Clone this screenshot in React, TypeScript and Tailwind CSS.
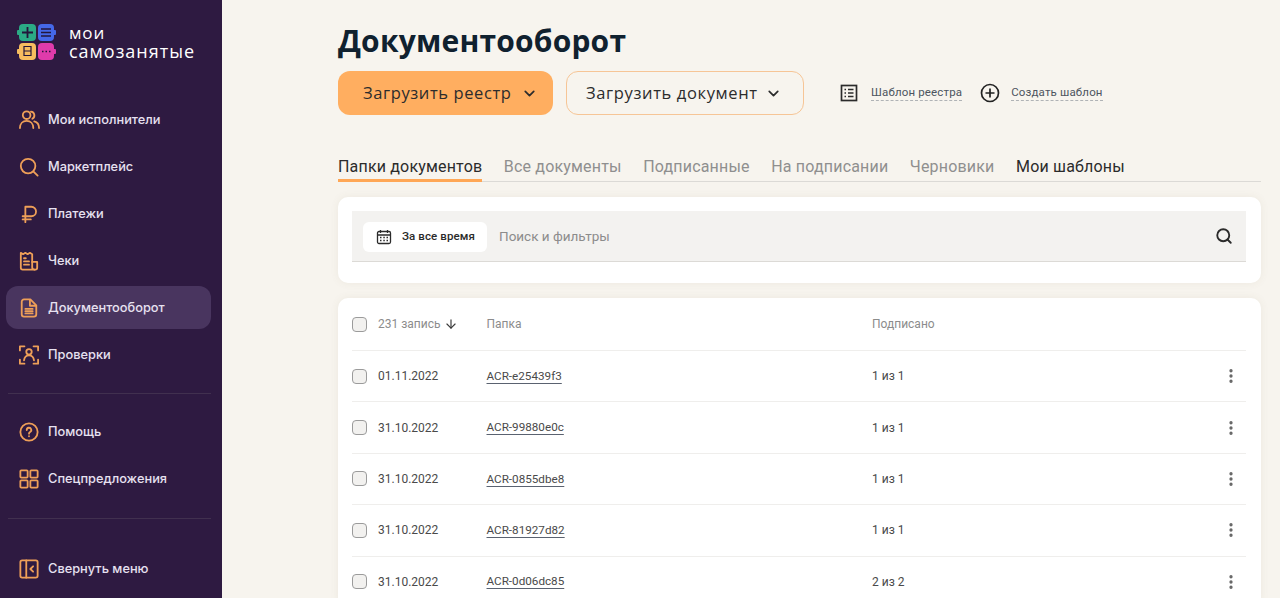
import { ChevronDown, ArrowDown, Search, EllipsisVertical } from 'lucide-react';
import type { ReactNode } from 'react';

const ic = 'w-[20px] h-[20px] fill-none stroke-[#ee9f58] stroke-[2]';

// ── Sidebar icons ────────────────────────────────────────────────────────────
const icons: Record<string, ReactNode> = {
  people: (
    <svg viewBox="0 0 22 22" className="w-[21px] h-[21px] fill-none stroke-[#ee9f58] stroke-[1.9]" strokeLinecap="round">
      <circle cx="8" cy="6.500" r="4" />
      <path d="M1 20c0-4.500 3-7.500 7-7.500s7 3 7 7.500" />
      <path d="M12.500 2.700a4 4 0 0 1 1.500 7.500M16 13c3 .8 5 3.500 5 7" />
    </svg>
  ),
  search: (
    <svg viewBox="0 0 22 22" className={ic} strokeLinecap="round">
      <circle cx="10" cy="10" r="8" />
      <path d="M16 16l4.500 4.500" />
    </svg>
  ),
  ruble: (
    <svg viewBox="0 0 22 22" className={ic} strokeLinecap="round" strokeLinejoin="round">
      <path d="M7 20V3h6.500a5 5 0 0 1 0 10.500H4M4 17h9" />
    </svg>
  ),
  receipt: (
    <svg viewBox="0 0 22 22" className={ic} strokeLinecap="round" strokeLinejoin="round">
      <path d="M2 2l2.500 1.500L7 2l2.500 1.500L12 2l2.500 1.500V18c0 1.500 1 2.500 2.500 2.500H4c-1.200 0-2-.8-2-2z" />
      <path d="M14.500 12H20v6.500a2 2 0 0 1-2 2h-1M5.500 8h2M5.500 11.500h5.500M5.500 15h5.500" />
    </svg>
  ),
  doc: (
    <svg viewBox="0 0 22 22" className={ic} strokeLinecap="round" strokeLinejoin="round">
      <path d="M3 4a2.500 2.500 0 0 1 2.500-2.500h7L19 8v10a2.500 2.500 0 0 1-2.500 2.500h-11A2.500 2.500 0 0 1 3 18z" />
      <path d="M12 2v6.500h6.500M7 12h8M7 14.500h8M7 17h8" />
    </svg>
  ),
  face: (
    <svg viewBox="0 0 22 22" className={ic} strokeLinecap="round" strokeLinejoin="round">
      <path d="M1 6V1.500h5M16 1.500h5V6M1 16v4.500h5M16 20.500h5V16" />
      <circle cx="11" cy="7.500" r="3" />
      <path d="M5.500 17c.5-3.500 2.500-5.500 5.500-5.500s5 2 5.500 5.500" />
    </svg>
  ),
  help: (
    <svg viewBox="0 0 22 22" className={ic} strokeLinecap="round" strokeLinejoin="round">
      <circle cx="11" cy="11" r="9.500" />
      <path d="M8.500 8.800a2.500 2.500 0 1 1 3.700 2.200c-.8.500-1.200 1-1.200 1.800M11 15.700v.1" />
    </svg>
  ),
  grid: (
    <svg viewBox="0 0 22 22" className={ic} strokeLinejoin="round">
      <rect x="1.500" y="1.500" width="8" height="8" rx="1" />
      <rect x="12.500" y="1.500" width="8" height="8" rx="1" />
      <rect x="1.500" y="12.500" width="8" height="8" rx="1" />
      <rect x="12.500" y="12.500" width="8" height="8" rx="1" />
    </svg>
  ),
  collapse: (
    <svg viewBox="0 0 22 22" className={ic} strokeLinecap="round" strokeLinejoin="round">
      <rect x="1.500" y="1.500" width="19" height="19" rx="2" />
      <path d="M8 1.500v19M15.500 8l-3 3 3 3" />
    </svg>
  ),
};

function Logo() {
  return (
    <svg viewBox="0 0 40 40" className="w-[40px] h-[40px] shrink-0">
      <rect x="2" y="2" width="17" height="17" rx="4" fill="#2bab85" />
      <rect x="0" y="8" width="3" height="5" rx="1" fill="#2bab85" />
      <path d="M10.500 5v11M5 10.500h11" stroke="#23163a" strokeWidth="1.800" />
      <rect x="21" y="2" width="16" height="17" rx="4" fill="#4568e8" />
      <rect x="36" y="8" width="3" height="5" rx="1" fill="#4568e8" />
      <path d="M24 7h10M24 10.500h10M24 14h10" stroke="#23163a" strokeWidth="1.500" />
      <rect x="2" y="21" width="17" height="17" rx="4" fill="#f7bd5f" />
      <rect x="0" y="27" width="3" height="5" rx="1" fill="#f7bd5f" />
      <path d="M7 24.500h7v9H7zM7 29h7" fill="none" stroke="#23163a" strokeWidth="1.200" />
      <rect x="21" y="21" width="16" height="17" rx="4" fill="#e03bab" />
      <rect x="36" y="27" width="3" height="5" rx="1" fill="#e03bab" />
      <path d="M25 29.500h1.500M28.500 29.500h1.500M32 29.500h1.500" stroke="#23163a" strokeWidth="1.600" />
    </svg>
  );
}

function NavItem({ icon, label, active }: { icon: string; label: string; active?: boolean }) {
  return (
    <div className={`flex items-center gap-[8px] h-[43px] pl-[12px] rounded-[12px] text-[12.800px] font-medium text-[#e7e1f0] ${active ? 'bg-[#49355f]' : ''}`}>
      <span className="w-[22px] flex justify-center">{icons[icon]}</span>
      <span>{label}</span>
    </div>
  );
}

// ── Table data ───────────────────────────────────────────────────────────────
const ROWS = [
  { date: '01.11.2022', folder: 'ACR-e25439f3', signed: '1 из 1' },
  { date: '31.10.2022', folder: 'ACR-99880e0c', signed: '1 из 1' },
  { date: '31.10.2022', folder: 'ACR-0855dbe8', signed: '1 из 1' },
  { date: '31.10.2022', folder: 'ACR-81927d82', signed: '1 из 1' },
  { date: '31.10.2022', folder: 'ACR-0d06dc85', signed: '2 из 2' },
];

const TABS = ['Все документы', 'Подписанные', 'На подписании', 'Черновики'];

function Checkbox() {
  return <span className="w-[15px] h-[15px] rounded-[4px] border border-[#9b9b9b] bg-[#f2f1ef] shrink-0" />;
}

export default function App() {
  return (
    <div className="flex h-[598px] w-[1280px] overflow-hidden bg-[#f7f4ee] font-['Inter',sans-serif]">
      {/* Sidebar */}
      <aside className="w-[222px] shrink-0 bg-[#2e1a41] pl-[6px] pr-[11px] pt-[22px]">
        <div className="flex items-center gap-[12px] pl-[11px] h-[40px]">
          <Logo />
          <div className="font-['Open_Sans',sans-serif] font-medium text-white -mt-[1px]">
            <div className="text-[17px] leading-[19px] h-[19px] tracking-[0.9px]">мои</div>
            <div className="text-[18px] leading-[19px] h-[19px] tracking-[1px]">самозанятые</div>
          </div>
        </div>
        <nav className="mt-[36px] flex flex-col gap-[4px]">
          <NavItem icon="people" label="Мои исполнители" />
          <NavItem icon="search" label="Маркетплейс" />
          <NavItem icon="ruble" label="Платежи" />
          <NavItem icon="receipt" label="Чеки" />
          <NavItem icon="doc" label="Документооборот" active />
          <NavItem icon="face" label="Проверки" />
        </nav>
        <div className="mt-[17px] mb-[16px] ml-[2px] h-px bg-[#41304f]" />
        <nav className="flex flex-col gap-[4px]">
          <NavItem icon="help" label="Помощь" />
          <NavItem icon="grid" label="Спецпредложения" />
        </nav>
        <div className="mt-[18px] mb-[28px] ml-[2px] h-px bg-[#41304f]" />
        <NavItem icon="collapse" label="Свернуть меню" />
      </aside>

      {/* Main */}
      <main className="ml-[116px] w-[923px] shrink-0 pt-[22px]">
        <h1 className="text-[30px] leading-[38px] font-bold text-[#10212f] font-['Open_Sans',sans-serif] tracking-[0.2px]">Документооборот</h1>

        <div className="mt-[11px] flex items-center">
          <button className="w-[215px] h-[44px] rounded-[12px] bg-[#ffae60] flex items-center pl-[25px] gap-[9px] text-[16.500px] text-[#2c2c2c] font-['Open_Sans',sans-serif] tracking-[0.6px]">
            Загрузить реестр <ChevronDown size={17} strokeWidth={2.4} />
          </button>
          <button className="ml-[13px] w-[238px] h-[44px] rounded-[12px] border border-[#f6c596] flex items-center pl-[19px] gap-[7px] text-[16.500px] text-[#2c2c2c] font-['Open_Sans',sans-serif] tracking-[0.63px]">
            Загрузить документ <ChevronDown size={17} strokeWidth={2.4} />
          </button>
          <svg viewBox="0 0 18 18" className="ml-[36px] w-[18px] h-[18px] fill-none stroke-[#2b2b2b] stroke-[1.7]">
            <rect x="1.500" y="1.500" width="15" height="15" />
            <path d="M4.500 5.500h1.500M8 5.500h5.500M4.500 9h1.500M8 9h5.500M4.500 12.500h1.500M8 12.500h5.500" />
          </svg>
          <span className="ml-[13px] text-[11.500px] leading-[15px] text-[#4d5560] border-b border-dashed border-[#b0b3b6] font-['Roboto',sans-serif] tracking-[0.15px]">Шаблон реестра</span>
          <svg viewBox="0 0 20 20" className="ml-[18px] w-[20px] h-[20px] fill-none stroke-[#222] stroke-[1.7]">
            <circle cx="10" cy="10" r="8.500" />
            <path d="M10 5.500v9M5.500 10h9" />
          </svg>
          <span className="ml-[11px] text-[11.500px] leading-[15px] text-[#4d5560] border-b border-dashed border-[#b0b3b6] font-['Roboto',sans-serif] tracking-[0.15px]">Создать шаблон</span>
        </div>

        {/* Tabs */}
        <div className="mt-[29px] h-[38px] flex gap-[21.500px] border-b border-[#dcdad6] text-[16px] font-['Roboto',sans-serif] tracking-[0.18px]">
          <span className="h-[38px] flex items-end text-[#2b2b2b] border-b-[3px] border-[#ffa756]">Папки документов</span>
          {TABS.map((t) => (
            <span key={t} className="h-[38px] flex items-end pb-[3px] text-[#8f8f8f]">{t}</span>
          ))}
          <span className="h-[38px] flex items-end pb-[3px] text-[#2b2b2b]">Мои шаблоны</span>
        </div>

        {/* Search card */}
        <section className="mt-[15px] h-[86px] rounded-[10px] bg-white pl-[14px] pr-[15px] py-[14px] shadow-[0_0_8px_rgba(120,100,70,0.08)]">
          <div className="h-[51px] bg-[#f3f2f0] border-b border-[#dcdad6] flex items-center pl-[11px] pr-[13px]">
            <div className="mt-[1px] w-[124px] h-[30px] rounded-[6px] bg-white flex items-center pl-[13px] gap-[10px] text-[11.500px] font-medium text-[#2b2b2b] font-['Roboto',sans-serif] tracking-[0.1px]">
              <svg viewBox="0 0 16 16" className="w-[16px] h-[16px] fill-none stroke-[#2b2b2b] stroke-[1.300]">
                <rect x="1.500" y="2.500" width="13" height="12" rx="1.500" />
                <path d="M1.500 6h13M4.500 1v3M11.500 1v3M4 8.500h1.500M7.300 8.500h1.500M10.500 8.500h1.500M4 11.500h1.500M7.300 11.500h1.500M10.500 11.500h1.500" />
              </svg>
              За все время
            </div>
            <span className="ml-[12px] text-[13.500px] text-[#8c8c8c] font-['Roboto',sans-serif]">Поиск и фильтры</span>
            <Search size={18} strokeWidth={2.5} className="ml-auto text-[#2b2b2b]" />
          </div>
        </section>

        {/* Table */}
        <section className="mt-[15px] rounded-[10px] bg-white pl-[14px] pr-[15px] shadow-[0_0_8px_rgba(120,100,70,0.08)] text-[12px] font-['Roboto',sans-serif]">
          <div className="h-[53px] flex items-center border-b border-[#efeeec] text-[#8c8c8c]">
            <Checkbox />
            <span className="ml-[11px] w-[108.500px] flex items-center gap-[4px]">
              231 запись <ArrowDown size={14} className="text-[#3a3a3a]" />
            </span>
            <span className="w-[385.500px]">Папка</span>
            <span>Подписано</span>
          </div>
          {ROWS.map((r) => (
            <div key={r.folder} className="h-[51.400px] flex items-center border-b border-[#efeeec] text-[#4a4a4a]">
              <Checkbox />
              <span className="ml-[11px] w-[108.500px]">{r.date}</span>
              <span className="w-[385.500px]">
                <span className="text-[11.700px] underline underline-offset-[3px] decoration-[#5a6270]">{r.folder}</span>
              </span>
              <span>{r.signed}</span>
              <EllipsisVertical size={18} strokeWidth={2.4} className="ml-auto mr-[6px] text-[#666]" />
            </div>
          ))}
        </section>
      </main>
    </div>
  );
}
